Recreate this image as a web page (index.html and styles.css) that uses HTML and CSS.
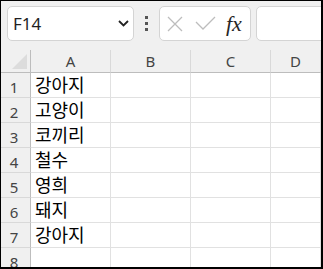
FILE: index.html
```html
<!DOCTYPE html>
<html>
<head>
    <meta charset="UTF-8">
    <title>Sheet</title>
    <link rel="stylesheet" href="styles.css">
</head>
<body>
    <div class="sheet">
        <div class="toolbar">
            <div class="namebox">
                <span>F14</span>
                <svg width="11" height="7" viewBox="0 0 11 7"><path d="M1 1 L5.5 5.5 L10 1" fill="none" stroke="#222" stroke-width="1.8"/></svg>
            </div>
            <div class="dots"><i></i><i></i><i></i></div>
            <div class="fxbox">
                <svg class="cancel" width="16" height="16" viewBox="0 0 16 16"><path d="M1 1 L15 15 M15 1 L1 15" stroke="#bdbdbd" stroke-width="1.3"/></svg>
                <svg class="enter" width="21" height="15" viewBox="0 0 21 15"><path d="M1 6 L8 13 L20 1" fill="none" stroke="#bdbdbd" stroke-width="1.3"/></svg>
                <span class="fx">fx</span>
            </div>
            <div class="formula"></div>
        </div>

        <div class="grid">
            <div class="corner"><span class="tri"></span></div>
            <div class="colhead">A</div>
            <div class="colhead">B</div>
            <div class="colhead">C</div>
            <div class="colhead">D</div>

            <div class="rowhead">1</div><div class="cell">강아지</div><div class="cell"></div><div class="cell"></div><div class="cell"></div>
            <div class="rowhead">2</div><div class="cell">고양이</div><div class="cell"></div><div class="cell"></div><div class="cell"></div>
            <div class="rowhead">3</div><div class="cell">코끼리</div><div class="cell"></div><div class="cell"></div><div class="cell"></div>
            <div class="rowhead">4</div><div class="cell">철수</div><div class="cell"></div><div class="cell"></div><div class="cell"></div>
            <div class="rowhead">5</div><div class="cell">영희</div><div class="cell"></div><div class="cell"></div><div class="cell"></div>
            <div class="rowhead">6</div><div class="cell">돼지</div><div class="cell"></div><div class="cell"></div><div class="cell"></div>
            <div class="rowhead">7</div><div class="cell">강아지</div><div class="cell"></div><div class="cell"></div><div class="cell"></div>
            <div class="rowhead">8</div><div class="cell"></div><div class="cell"></div><div class="cell"></div><div class="cell"></div>
        </div>
    </div>
</body>
</html>
```

FILE: styles.css
```css
* {
    box-sizing: border-box;
}
body {
    margin: 0;
    font-family: "Noto Sans", "Noto Sans CJK KR", sans-serif;
}
.sheet {
    width: 323px;
    height: 269px;
    border: 1px solid #000;
    border-right-width: 2px;
    border-bottom-width: 2px;
    background: #fff;
    overflow: hidden;
}
.toolbar {
    display: flex;
    align-items: center;
    height: 49px;
    padding: 5px 0 9px 6px;
    background: #f0f0f0;
}
.namebox {
    display: flex;
    align-items: center;
    justify-content: space-between;
    width: 127px;
    height: 35px;
    padding: 0 4px 0 5px;
    background: #fff;
    border: 1px solid #d4d4d4;
    border-radius: 5px;
    font-size: 17px;
    color: #1f1f1f;
}
.dots {
    display: flex;
    flex-direction: column;
    gap: 3px;
    margin: 0 11px 0 11px;
}
.dots i {
    display: block;
    width: 3px;
    height: 3px;
    background: #555;
}
.fxbox {
    display: flex;
    align-items: center;
    width: 92px;
    height: 35px;
    padding-left: 7px;
    background: #fff;
    border: 1px solid #d4d4d4;
    border-radius: 5px;
}
.enter {
    margin-left: 12px;
}
.fx {
    margin-left: 10px;
    font-family: "Liberation Serif", serif;
    font-style: italic;
    font-size: 22px;
    color: #262626;
}
.formula {
    flex: 1;
    height: 35px;
    margin-left: 5px;
    margin-right: -10px;
    background: #fff;
    border: 1px solid #d4d4d4;
    border-radius: 5px;
}
.grid {
    display: grid;
    grid-template-columns: 30px 80px 80px 80px 1fr;
    grid-template-rows: 23px repeat(8, 25px);
}
.grid > div {
    border-right: 1px solid #e1e1e1;
    border-bottom: 1px solid #e1e1e1;
}
.corner, .colhead {
    background: #f0f0f0;
    border-bottom-color: #bdbdbd !important;
}
.corner {
    position: relative;
    border-right-color: #bdbdbd !important;
}
.tri {
    position: absolute;
    right: 3px;
    bottom: 3px;
    width: 0;
    height: 0;
    border-left: 15px solid transparent;
    border-bottom: 15px solid #dcdcdc;
}
.colhead {
    text-align: center;
    font-size: 15px;
    line-height: 22px;
    color: #444;
    border-right-color: #d9d9d9 !important;
}
.rowhead {
    background: #f0f0f0;
    text-align: center;
    padding-right: 3px;
    padding-top: 3px;
    font-size: 15px;
    line-height: 22px;
    color: #444;
    border-right-color: #bdbdbd !important;
    border-bottom-color: #d9d9d9 !important;
}
.cell {
    padding-left: 4px;
    font-size: 18px;
    line-height: 24px;
    color: #000;
}
```
